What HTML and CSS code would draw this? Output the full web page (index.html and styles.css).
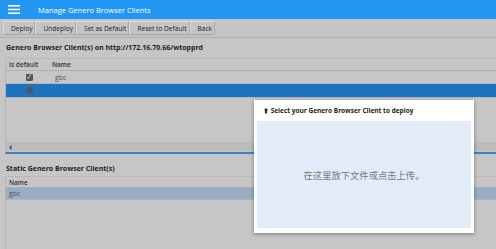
FILE: index.html
```html
<!DOCTYPE html>
<html>
<head>
<meta charset="utf-8">
<link rel="stylesheet" href="styles.css">
</head>
<body>
<div class="page">
  <header class="topbar">
    <svg class="menu" width="12" height="9" viewBox="0 0 12 9"><rect x="0" y="0" width="12" height="1.6" fill="#fff"/><rect x="0" y="3.7" width="12" height="1.6" fill="#fff"/><rect x="0" y="7.4" width="12" height="1.6" fill="#fff"/></svg>
    <span class="apptitle">Manage Genero Browser Clients</span>
  </header>
  <div class="toolbar">
    <span class="btn">Deploy</span>
    <span class="btn">Undeploy</span>
    <span class="btn">Set as Default</span>
    <span class="btn">Reset to Default</span>
    <span class="btn">Back</span>
  </div>
  <section class="group g1">
    <div class="gtitle">Genero Browser Client(s) on http://172.16.70.66/wtopprd</div>
    <div class="table">
      <div class="thead"><span class="c1">Is default</span><span class="c2">Name</span></div>
      <div class="row"><span class="c1"><span class="chk on">✓</span></span><span class="c2">gbc</span></div>
      <div class="row sel"><span class="c1"><span class="chk"></span></span><span class="c2"></span></div>
      <div class="fill"></div>
      <div class="hscroll"><span class="arrow">‹</span></div>
    </div>
  </section>
  <section class="group g2">
    <div class="gtitle">Static Genero Browser Client(s)</div>
    <div class="table t2">
      <div class="thead"><span class="c2">Name</span></div>
      <div class="row cur"><span class="c2">gbc</span></div>
    </div>
  </section>
  <div class="dialog">
    <div class="dtitle"><span class="up">⬆</span> Select your Genero Browser Client to deploy</div>
    <div class="drop">在这里放下文件或点击上传。</div>
  </div>
</div>
</body>
</html>
```
FILE: styles.css
```css
* { box-sizing: border-box; }
html, body { margin: 0; padding: 0; }
body {
  width: 496px; height: 249px; overflow: hidden;
  background: #c6c6c6;
  font-family: "Open Sans", "Noto Sans CJK SC", sans-serif;
  font-size: 7px;
  color: #222;
}
.page { position: relative; width: 496px; height: 249px; display: flex; flex-direction: column; overflow: hidden; }
.topbar {
  height: 19px; flex: none; background: #2196f3; display: flex; align-items: center;
  padding-left: 8px; color: #fff; box-shadow: 0 1px 1px rgba(0,0,0,0.25);
}
.menu { margin-right: 18px; }
.apptitle { font-size: 7.5px; }
.toolbar {
  height: 19px; flex: none; display: flex; align-items: center; padding: 0 3px;
  border-bottom: 1px solid #b0b0b0; background: #c4c4c4;
}
.btn {
  height: 14px; line-height: 13px; padding: 0 2px 0 7px;
  border: 1px solid #dadada; border-right-color: #a8a8a8; border-bottom-color: #a8a8a8;
  font-size: 6.6px; color: #222; white-space: nowrap;
}
.group { padding: 0 0 0 5px; flex: none; }
.gtitle { font-weight: 700; font-size: 7px; padding: 5px 0 0 1px; height: 20px; color: #222; }
.table { border-left: 1px solid #b4b4b4; }
.g1 .table { height: 96px; display: flex; flex-direction: column; border-bottom: 2px solid #3a7fc4; }
.thead { height: 13px; flex: none; display: flex; align-items: center; border-bottom: 1px solid #b0b0b0; border-top: 1px solid #b8b8b8; font-size: 6.5px; font-weight: 600; color: #333; }
.row { height: 13px; flex: none; display: flex; align-items: center; border-bottom: 1px solid #b3b3b3; }
.row.sel { background: #1e73be; height: 14px; }
.row.cur { background: #98aec4; }
.c1 { width: 43px; padding-left: 3px; display: flex; justify-content: flex-start; }
.row .c1 { justify-content: center; padding-left: 0; width: 46px; }
.thead .c2 { padding-left: 3px; }
.row .c2 { padding-left: 3px; color: #555; }
.chk {
  width: 7px; height: 7px; background: #555; color: #fff; display: inline-flex;
  align-items: center; justify-content: center; font-size: 6px; line-height: 1; border-radius: 1px;
}
.row.sel .chk { background: #4a5a6a; }
.fill { flex: 1; }
.hscroll { height: 9px; flex: none; background: #bcbcbc; display: flex; align-items: center; padding-left: 3px; margin-bottom: 1px; }
.arrow { font-size: 9px; line-height: 1; color: #333; font-weight: 700; }
.g2 { margin-top: 1px; flex: 1; min-height: 0; }
.g2 .gtitle { padding-top: 9px; height: 21px; }
.t2 { height: 100%; }
.t2 .thead { height: 12px; }
.t2 .row { height: 12px; }
.dialog {
  position: absolute; left: 254px; top: 100px; width: 220px; height: 133px;
  background: #fff; box-shadow: 0 1px 4px rgba(0,0,0,0.4); padding: 3px 3px 5px 3px;
  display: flex; flex-direction: column;
}
.dtitle { height: 18px; font-weight: 700; font-size: 6.5px; padding: 3px 0 0 6px; color: #222; }
.up { font-size: 6px; }
.drop {
  flex: 1; background: #e1ecf8; display: flex; align-items: center; justify-content: center;
  color: #777; font-size: 9.3px; font-family: "Noto Sans CJK SC", sans-serif;
}
```
